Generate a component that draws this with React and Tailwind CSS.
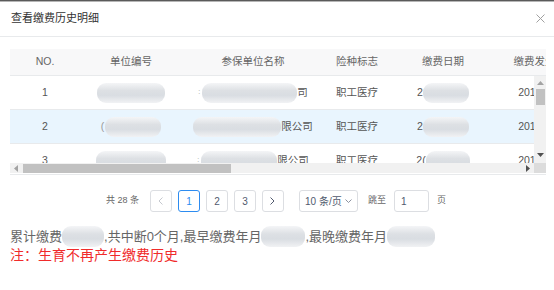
import React from 'react';

const cols = [
    { title: 'NO.', w: 'w-[70px]' },
    { title: '单位编号', w: 'w-[102px]' },
    { title: '参保单位名称', w: 'w-[142px]' },
    { title: '险种标志', w: 'w-[66px]' },
    { title: '缴费日期', w: 'w-[106px]' },
    { title: '缴费发生年月', w: 'w-[98px]' },
    { title: '缴费基数', w: 'w-[110px]' },
    { title: '单位缴费', w: 'w-[110px]' },
];

const Blur = ({ w, h = 'h-[20px]' }) => (
    <span className={`inline-block align-middle ${w} ${h} rounded-[9px] bg-[linear-gradient(#f4f5f7,#dde0e4_38%,#d9dde2_62%,#f1f2f4)] blur-[0.6px]`} />
);

const rows = [
    {
        no: '1',
        code: <Blur w="w-[68px]" />,
        name: (<><span className="text-[7px] text-[#999] mr-[2px]">:</span><Blur w="w-[95px]" /><span>司</span></>),
        date: (<><span>2</span><Blur w="w-[46px]" /></>),
    },
    {
        no: '2',
        code: (<><span className="text-[#999] mr-[1px]">(</span><Blur w="w-[56px]" /></>),
        name: (<><Blur w="w-[88px]" /><span>限公司</span></>),
        date: (<><span>2</span><Blur w="w-[46px]" /></>),
    },
    {
        no: '3',
        code: <Blur w="w-[70px]" />,
        name: (<><span className="text-[7px] text-[#999] mr-[2px]">:</span><Blur w="w-[76px]" /><span>限公司</span></>),
        date: (<><span>2(</span><Blur w="w-[44px]" /></>),
    },
];

const PageBtn = ({ children, active }) => (
    <div className={`w-[22px] h-[22px] flex items-center justify-center rounded-[3px] border text-[10px] ${active ? 'border-[#2d8cf0] text-[#2d8cf0]' : 'border-[#dcdee2] text-[#515a6e]'}`}>
        {children}
    </div>
);

export default function App() {
    return (
        <div className="w-[554px] h-[290px] bg-white overflow-hidden font-['Liberation_Sans','Noto_Sans_CJK_SC',sans-serif]">
            <div className="h-[1px] bg-[#5a5a5a]" />
            <div className="h-[1px] bg-[#b5b5b5]" />

            {/* header */}
            <div className="h-[35px] flex items-center justify-between pl-[11px] pr-[9px] pb-[1px] border-b border-[#e8eaec]">
                <span className="text-[11px] text-[#333]">查看缴费历史明细</span>
                <svg width="9" height="9" viewBox="0 0 9 9" className="mb-[1px]">
                    <path d="M0.5 0.5L8.5 8.5M8.5 0.5L0.5 8.5" stroke="#a0a0a0" strokeWidth="1" />
                </svg>
            </div>

            {/* table */}
            <div className="mx-[10px] mt-[12px] w-[536px] border-b border-[#e8eaec] pb-[1px]">
                <div className="h-[27px] bg-[#f8f8f9] flex overflow-hidden border-b border-[#e8eaec]">
                    {cols.map(c => (
                        <div key={c.title} className={`${c.w} shrink-0 flex items-center justify-center text-[10.5px] text-[#666]`}>
                            {c.title}
                        </div>
                    ))}
                </div>

                <div className="flex h-[87px]">
                    <div className="w-[524px] overflow-hidden">
                        {rows.map((r, i) => (
                            <div key={r.no} className={`h-[34px] flex shrink-0 border-b border-[#e8eaec] text-[10.5px] text-[#555] ${i === 1 ? 'bg-[#e9f5fe]' : ''}`}>
                                <div className="w-[70px] shrink-0 flex items-center justify-center">{r.no}</div>
                                <div className="w-[102px] shrink-0 flex items-center justify-center">{r.code}</div>
                                <div className="w-[142px] shrink-0 flex items-center justify-center">{r.name}</div>
                                <div className="w-[66px] shrink-0 flex items-center justify-center">职工医疗</div>
                                <div className="w-[106px] shrink-0 flex items-center justify-center">{r.date}</div>
                                <div className="w-[98px] shrink-0 flex items-center justify-center">2019-01-01</div>
                            </div>
                        ))}
                    </div>
                    {/* vertical scrollbar */}
                    <div className="w-[12px] bg-[#f1f1f1] flex flex-col items-center">
                        <svg width="7" height="4" viewBox="0 0 7 4" className="mt-[5px]">
                            <path d="M3.5 0L7 4H0Z" fill="#a3a3a3" />
                        </svg>
                        <div className="mt-[4px] w-[9px] h-[16px] bg-[#c1c1c1]" />
                        <div className="flex-1" />
                        <svg width="7" height="4" viewBox="0 0 7 4" className="mb-[6px]">
                            <path d="M0 0H7L3.5 4Z" fill="#505050" />
                        </svg>
                    </div>
                </div>

                {/* horizontal scrollbar */}
                <div className="flex h-[10px]">
                    <div className="w-[524px] bg-[#f1f1f1] flex items-center">
                        <svg width="4" height="7" viewBox="0 0 4 7" className="ml-[4px]">
                            <path d="M4 0V7L0 3.5Z" fill="#a3a3a3" />
                        </svg>
                        <div className="ml-[5px] w-[208px] h-[9px] bg-[#c1c1c1]" />
                        <div className="flex-1" />
                        <svg width="4" height="7" viewBox="0 0 4 7" className="mr-[4px]">
                            <path d="M0 0L4 3.5L0 7Z" fill="#505050" />
                        </svg>
                    </div>
                    <div className="w-[12px] bg-[#dcdcdc]" />
                </div>
            </div>

            {/* pagination */}
            <div className="mt-[15px] h-[22px] flex items-center justify-center pr-[2px]">
                <span className="text-[9px] text-[#666] mr-[11px]">共 28 条</span>
                <div className="flex gap-[6px]">
                    <PageBtn>
                        <svg width="5" height="8" viewBox="0 0 5 8"><path d="M4.5 0.5L1 4L4.5 7.5" fill="none" stroke="#c5c8ce" strokeWidth="1" /></svg>
                    </PageBtn>
                    <PageBtn active>1</PageBtn>
                    <PageBtn>2</PageBtn>
                    <PageBtn>3</PageBtn>
                    <PageBtn>
                        <svg width="5" height="8" viewBox="0 0 5 8"><path d="M0.5 0.5L4 4L0.5 7.5" fill="none" stroke="#515a6e" strokeWidth="1" /></svg>
                    </PageBtn>
                </div>
                <div className="ml-[15px] w-[59px] h-[22px] border border-[#dcdee2] rounded-[3px] flex items-center pl-[5px] text-[10px] text-[#515a6e]">
                    10 条/页
                    <svg width="7" height="4" viewBox="0 0 7 4" className="ml-[3px]">
                        <path d="M0.5 0.5L3.5 3.5L6.5 0.5" fill="none" stroke="#808695" strokeWidth="0.9" />
                    </svg>
                </div>
                <span className="ml-[10px] text-[9px] text-[#666]">跳至</span>
                <div className="ml-[8px] w-[35px] h-[22px] border border-[#dcdee2] rounded-[3px] flex items-center pl-[6px] text-[10px] text-[#515a6e]">1</div>
                <span className="ml-[8px] text-[9px] text-[#666]">页</span>
            </div>

            {/* summary */}
            <div className="mt-[15px] px-[10px]">
                <div className="h-[19px] flex items-center text-[13px] text-[#666] whitespace-nowrap">
                    累计缴费<Blur w="w-[42px]" h="h-[21px]" />,共中断0个月,最早缴费年月<Blur w="w-[44px]" h="h-[21px]" />,最晚缴费年月<Blur w="w-[48px]" h="h-[21px]" />
                </div>
                <div className="h-[19px] flex items-center text-[14px] text-[#f02b2b] whitespace-nowrap">
                    注：生育不再产生缴费历史
                </div>
            </div>
        </div>
    );
}
